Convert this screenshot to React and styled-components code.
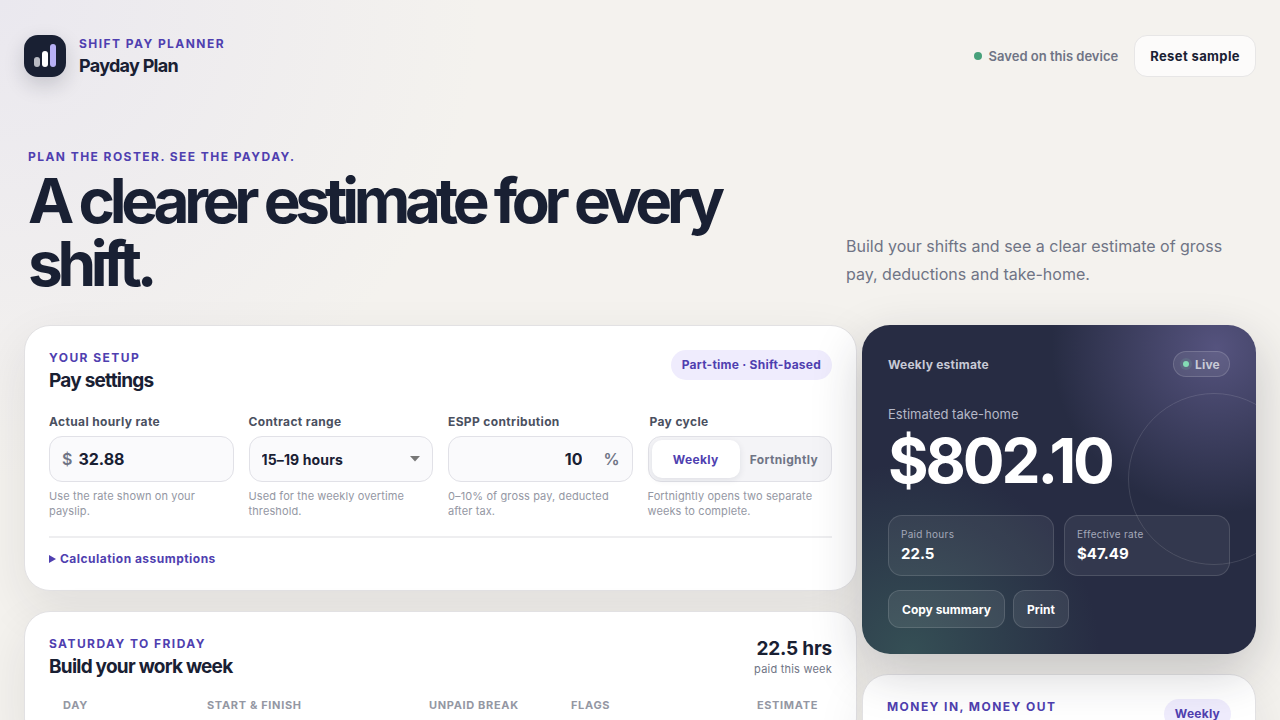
import React, { useState } from "react";
import styled, { createGlobalStyle, css } from "styled-components";

const ink = "#192033";
const violet = "#4f3fb0";
const muted = "#6f7485";

const GlobalStyle = createGlobalStyle`
  *, *::before, *::after { box-sizing: border-box; }
  body {
    margin: 0;
    min-height: 100vh;
    color: ${ink};
    background: radial-gradient(circle at 0 0, #eae8ef, transparent 480px) no-repeat #f4f2ee;
    font-family: Inter, "Liberation Sans", sans-serif;
    font-size: 16px;
  }
  button, input, select { font: inherit; color: inherit; }
  h1, h2, p { margin: 0; }
`;

const Page = styled.div`
  max-width: 1280px;
  margin: 0 auto;
  padding: 28px 24px 0;
  overflow: clip;
`;

const Header = styled.header`
  display: flex;
  align-items: center;
  justify-content: space-between;
  height: 56px;
`;

const Brand = styled.div`
  display: flex;
  align-items: center;
  gap: 13px;
`;

const BrandText = styled.div`
  padding-top: 4px;
`;

const Logo = styled.div`
  display: flex;
  width: 42px;
  height: 42px;
  border-radius: 14px;
  background: ${ink};
  box-shadow: 0 8px 20px rgba(26, 32, 50, 0.18);
`;

const Eyebrow = styled.p`
  color: ${violet};
  font-size: 12px;
  line-height: 16px;
  font-weight: 700;
  letter-spacing: 0.12em;
  text-transform: uppercase;
`;

const BrandName = styled.p`
  font-size: 18px;
  line-height: 28px;
  font-weight: 650;
  letter-spacing: -0.04em;
`;

const HeaderActions = styled.div`
  display: flex;
  align-items: center;
  gap: 16px;
`;

const Dot = styled.span`
  width: ${(p) => p.$size}px;
  height: ${(p) => p.$size}px;
  border-radius: 50%;
  background: ${(p) => p.$color};
  box-shadow: ${(p) => p.$glow || "none"};
`;

const SaveState = styled.span`
  display: inline-flex;
  align-items: center;
  gap: 7px;
  color: ${muted};
  font-size: 13px;
  font-weight: 600;
`;

const ResetButton = styled.button`
  height: 42px;
  padding: 0 15px;
  border: 1px solid #e7e6e6;
  border-radius: 13px;
  background: #fcfbfa;
  font-size: 13px;
  font-weight: 700;
  letter-spacing: 0.03em;
`;

const Hero = styled.section`
  display: grid;
  grid-template-columns: minmax(0, 1fr) 386px;
  align-items: end;
  gap: 48px;
  padding: 65px 24px 30px 4px;
`;

const Headline = styled.h1`
  margin-top: 4px;
  font-size: 62px;
  line-height: 63px;
  font-weight: 700;
  letter-spacing: -0.085em;
`;

const Lead = styled.p`
  padding-bottom: 7px;
  color: ${muted};
  font-size: 16px;
  line-height: 28px;
`;

const Workspace = styled.main`
  display: grid;
  grid-template-columns: minmax(0, 1fr) 394px;
  gap: 5px;
  align-items: start;
`;

const Column = styled.div`
  display: grid;
  gap: 20px;
  min-width: 0;
`;

const Card = styled.section`
  padding: 24px;
  border: 1px solid #e2e1e3;
  border-radius: 26px;
  background: #fff;
  box-shadow: 0 18px 50px rgba(32, 30, 44, 0.09);
`;

const CardHeader = styled.div`
  display: flex;
  align-items: flex-start;
  justify-content: space-between;
`;

const CardTitle = styled.h2`
  font-size: 19px;
  line-height: 30px;
  font-weight: 650;
  letter-spacing: -0.04em;
`;

const Pill = styled.span`
  padding: 0 11px;
  border-radius: 15px;
  color: ${violet};
  background: #efecfd;
  font-size: 12px;
  line-height: 30px;
  font-weight: 700;
  letter-spacing: 0.02em;
`;

const SettingsGrid = styled.div`
  display: grid;
  grid-template-columns: repeat(4, minmax(0, 1fr));
  gap: 15px;
  padding: 18px 0 17px;
  border-bottom: 2px solid #eeeef0;
`;

const labelText = css`
  display: block;
  height: 22px;
  color: #4a5060;
  font-size: 12px;
  line-height: 16px;
  font-weight: 700;
  letter-spacing: 0.03em;
`;

const Field = styled.div`
  min-width: 0;
`;

const Label = styled.label`
  ${labelText}
`;

const controlFrame = css`
  display: flex;
  align-items: center;
  height: 46px;
  border: 1px solid #e1e1e7;
  border-radius: 13px;
  background: #fafafc;
`;

const InputFrame = styled.div`
  ${controlFrame}
  gap: 6px;
  padding: 0 12px;
  color: ${muted};
  font-size: 16px;
  font-weight: 600;
`;

const TextInput = styled.input`
  flex: 1;
  min-width: 0;
  padding: 0;
  padding-right: ${(p) => (p.$end ? 15 : 0)}px;
  border: 0;
  outline: 0;
  background: transparent;
  color: ${ink};
  font-weight: 700;
  text-align: ${(p) => (p.$end ? "right" : "left")};
`;

const SelectFrame = styled.div`
  ${controlFrame}
  position: relative;
`;

const Select = styled.select`
  width: 100%;
  height: 100%;
  padding: 0 32px 0 12px;
  border: 0;
  border-radius: 13px;
  outline: 0;
  appearance: none;
  background: transparent;
  font-size: 14px;
  font-weight: 650;
  letter-spacing: 0.01em;
`;

const Caret = styled.svg`
  position: absolute;
  right: 12px;
  pointer-events: none;
`;

const CycleField = styled.fieldset`
  min-width: 0;
  margin: 0;
  padding: 0;
  border: 0;
`;

const Legend = styled.legend`
  ${labelText}
  padding: 0 2px;
`;

const Segments = styled.div`
  ${controlFrame}
  padding: 3px;
  background: #f4f4f7;
`;

const Segment = styled.button`
  flex: 1;
  min-width: 0;
  height: 38px;
  padding: 0;
  border: 0;
  border-radius: 10px;
  color: ${(p) => (p.$active ? violet : muted)};
  background: ${(p) => (p.$active ? "#fff" : "transparent")};
  box-shadow: ${(p) => (p.$active ? "0 2px 7px rgba(26, 32, 50, 0.09)" : "none")};
  font-size: 12px;
  font-weight: 700;
  letter-spacing: 0.03em;
`;

const Hint = styled.p`
  margin-top: 7px;
  color: #9497a3;
  font-size: 11px;
  line-height: 15px;
  letter-spacing: 0.01em;
`;

const Assumptions = styled.details`
  padding-top: 13px;
  color: ${violet};
  font-size: 12px;
  line-height: 16px;
  font-weight: 700;
  letter-spacing: 0.04em;

  summary {
    display: flex;
    align-items: center;
    gap: 4px;
    cursor: pointer;
  }
`;

const SettingsCard = styled(Card)`
  padding-bottom: 23px;
`;

const WeekTotal = styled.div`
  text-align: right;
`;

const WeekHours = styled.p`
  padding-top: 1px;
  font-size: 19px;
  line-height: 24px;
  font-weight: 700;
  letter-spacing: -0.01em;
`;

const WeekNote = styled.p`
  color: ${muted};
  font-size: 11px;
  line-height: 16px;
  letter-spacing: 0.02em;
`;

const RosterTable = styled.table`
  width: 100%;
  margin-top: 8px;
  border-collapse: collapse;
  table-layout: fixed;
`;

const HeadCell = styled.th`
  width: ${(p) => p.$width || "auto"};
  padding: 7px 14px;
  color: #9497a3;
  font-size: 11px;
  line-height: 16px;
  font-weight: 700;
  letter-spacing: 0.06em;
  text-transform: uppercase;
  text-align: ${(p) => p.$align || "left"};
  white-space: nowrap;
`;

const Estimate = styled.section`
  position: relative;
  z-index: 1;
  overflow: hidden;
  padding: 26px;
  border-radius: 28px;
  color: #fff;
  background:
    radial-gradient(circle at 90% 7%, #55537e, transparent 165px),
    radial-gradient(circle at 12% 100%, #354f55, transparent 190px),
    #272c43;
`;

const EstimateShadow = styled.div`
  position: relative;
  z-index: 1;
  border-radius: 28px;
  box-shadow: 0 18px 50px rgba(32, 30, 44, 0.22);
`;

const Ring = styled.span`
  position: absolute;
  z-index: -1;
  top: 68px;
  right: -44px;
  width: 172px;
  height: 172px;
  border: 1px solid rgba(255, 255, 255, 0.12);
  border-radius: 50%;
`;

const EstimateHeader = styled.div`
  display: flex;
  align-items: center;
  justify-content: space-between;
  color: #c8cad6;
  font-size: 12px;
  font-weight: 650;
  letter-spacing: 0.02em;
`;

const LiveBadge = styled.span`
  display: inline-flex;
  align-items: center;
  gap: 6px;
  height: 26px;
  padding: 0 9px;
  border: 1px solid rgba(255, 255, 255, 0.15);
  border-radius: 13px;
  background: rgba(255, 255, 255, 0.08);
`;

const EstimateLabel = styled.p`
  margin-top: 27px;
  color: #b5b8c7;
  font-size: 13px;
  line-height: 20px;
`;

const Amount = styled.p`
  margin-top: 3px;
  font-size: 62px;
  line-height: 68px;
  font-weight: 700;
  letter-spacing: -0.05em;
`;

const Stats = styled.div`
  display: grid;
  grid-template-columns: 1fr 1fr;
  gap: 10px;
  margin-top: 20px;
`;

const glass = css`
  border: 1px solid rgba(255, 255, 255, 0.13);
  background: rgba(255, 255, 255, 0.06);
`;

const Stat = styled.div`
  ${glass}
  padding: 10px 12px;
  border-radius: 14px;
`;

const StatLabel = styled.p`
  color: #a4a8b9;
  font-size: 10px;
  line-height: 17px;
  letter-spacing: 0.03em;
`;

const StatValue = styled.p`
  font-size: 15px;
  line-height: 22px;
  font-weight: 700;
`;

const Actions = styled.div`
  display: flex;
  gap: 8px;
  margin-top: 14px;
`;

const GlassButton = styled.button`
  ${glass}
  height: 38px;
  padding: 0 13px;
  border-radius: 12px;
  background: rgba(255, 255, 255, 0.08);
  font-size: 12px;
  font-weight: 700;
`;

export default function App() {
  const [cycle, setCycle] = useState("Weekly");
  const [rate, setRate] = useState("32.88");
  const [espp, setEspp] = useState("10");

  return (
    <>
      <GlobalStyle />
      <Page>
        <Header>
          <Brand>
            <Logo>
              <svg width="42" height="42" viewBox="0 0 42 42" aria-hidden="true">
                <rect x="10" y="22" width="6" height="10" rx="3" fill="#b9bbc4" />
                <rect x="18" y="16" width="6" height="16" rx="3" fill="#fff" />
                <rect x="26" y="9" width="6" height="23" rx="3" fill="#b7b0f5" />
              </svg>
            </Logo>
            <BrandText>
              <Eyebrow>Shift Pay Planner</Eyebrow>
              <BrandName>Payday Plan</BrandName>
            </BrandText>
          </Brand>
          <HeaderActions>
            <SaveState><Dot $size={8} $color="#47a07a" />Saved on this device</SaveState>
            <ResetButton type="button">Reset sample</ResetButton>
          </HeaderActions>
        </Header>

        <Hero>
          <div>
            <Eyebrow>Plan the roster. See the payday.</Eyebrow>
            <Headline>A clearer estimate for every shift.</Headline>
          </div>
          <Lead>Build your shifts and see a clear estimate of gross pay, deductions and take-home.</Lead>
        </Hero>

        <Workspace>
          <Column>
            <SettingsCard>
              <CardHeader>
                <div>
                  <Eyebrow>Your setup</Eyebrow>
                  <CardTitle>Pay settings</CardTitle>
                </div>
                <Pill>Part-time · Shift-based</Pill>
              </CardHeader>
              <SettingsGrid>
                <Field>
                  <Label htmlFor="rate">Actual hourly rate</Label>
                  <InputFrame>
                    <span>$</span>
                    <TextInput id="rate" inputMode="decimal" value={rate} onChange={(e) => setRate(e.target.value)} />
                  </InputFrame>
                  <Hint>Use the rate shown on your payslip.</Hint>
                </Field>
                <Field>
                  <Label htmlFor="range">Contract range</Label>
                  <SelectFrame>
                    <Select id="range">
                      <option>15–19 hours</option>
                    </Select>
                    <Caret width="10" height="6" viewBox="0 0 10 6" aria-hidden="true">
                      <path d="M0 0h10L5 5.5z" fill="#777" />
                    </Caret>
                  </SelectFrame>
                  <Hint>Used for the weekly overtime threshold.</Hint>
                </Field>
                <Field>
                  <Label htmlFor="espp">ESPP contribution</Label>
                  <InputFrame>
                    <TextInput id="espp" inputMode="numeric" $end value={espp} onChange={(e) => setEspp(e.target.value)} />
                    <span>%</span>
                  </InputFrame>
                  <Hint>0–10% of gross pay, deducted after tax.</Hint>
                </Field>
                <CycleField>
                  <Legend>Pay cycle</Legend>
                  <Segments>
                    {["Weekly", "Fortnightly"].map((name) => (
                      <Segment
                        key={name}
                        type="button"
                        $active={cycle === name}
                        aria-pressed={cycle === name}
                        onClick={() => setCycle(name)}
                      >
                        {name}
                      </Segment>
                    ))}
                  </Segments>
                  <Hint>Fortnightly opens two separate weeks to complete.</Hint>
                </CycleField>
              </SettingsGrid>
              <Assumptions>
                <summary>
                  <svg width="7" height="8" viewBox="0 0 7 8" aria-hidden="true">
                    <path d="M0 0l7 4-7 4z" fill="currentColor" />
                  </svg>
                  Calculation assumptions
                </summary>
              </Assumptions>
            </SettingsCard>

            <Card>
              <CardHeader>
                <div>
                  <Eyebrow>Saturday to Friday</Eyebrow>
                  <CardTitle>Build your work week</CardTitle>
                </div>
                <WeekTotal>
                  <WeekHours>22.5 hrs</WeekHours>
                  <WeekNote>paid this week</WeekNote>
                </WeekTotal>
              </CardHeader>
              <RosterTable>
                <thead>
                  <tr>
                    <HeadCell $width="144px">Day</HeadCell>
                    <HeadCell $width="222px">Start &amp; finish</HeadCell>
                    <HeadCell $width="142px">Unpaid break</HeadCell>
                    <HeadCell>Flags</HeadCell>
                    <HeadCell $align="right">Estimate</HeadCell>
                  </tr>
                </thead>
              </RosterTable>
            </Card>
          </Column>

          <Column>
            <EstimateShadow>
              <Estimate>
                <Ring />
                <EstimateHeader>
                  <span>Weekly estimate</span>
                  <LiveBadge>
                    <Dot $size={6} $color="#84dcb5" $glow="0 0 0 3px rgba(132, 220, 181, 0.12)" />
                    Live
                  </LiveBadge>
                </EstimateHeader>
                <EstimateLabel>Estimated take-home</EstimateLabel>
                <Amount>$802.10</Amount>
                <Stats>
                  <Stat>
                    <StatLabel>Paid hours</StatLabel>
                    <StatValue>22.5</StatValue>
                  </Stat>
                  <Stat>
                    <StatLabel>Effective rate</StatLabel>
                    <StatValue>$47.49</StatValue>
                  </Stat>
                </Stats>
                <Actions>
                  <GlassButton type="button">Copy summary</GlassButton>
                  <GlassButton type="button">Print</GlassButton>
                </Actions>
              </Estimate>
            </EstimateShadow>
            <Card>
              <CardHeader>
                <Eyebrow>Money in, money out</Eyebrow>
                <Pill>Weekly</Pill>
              </CardHeader>
            </Card>
          </Column>
        </Workspace>
      </Page>
    </>
  );
}
